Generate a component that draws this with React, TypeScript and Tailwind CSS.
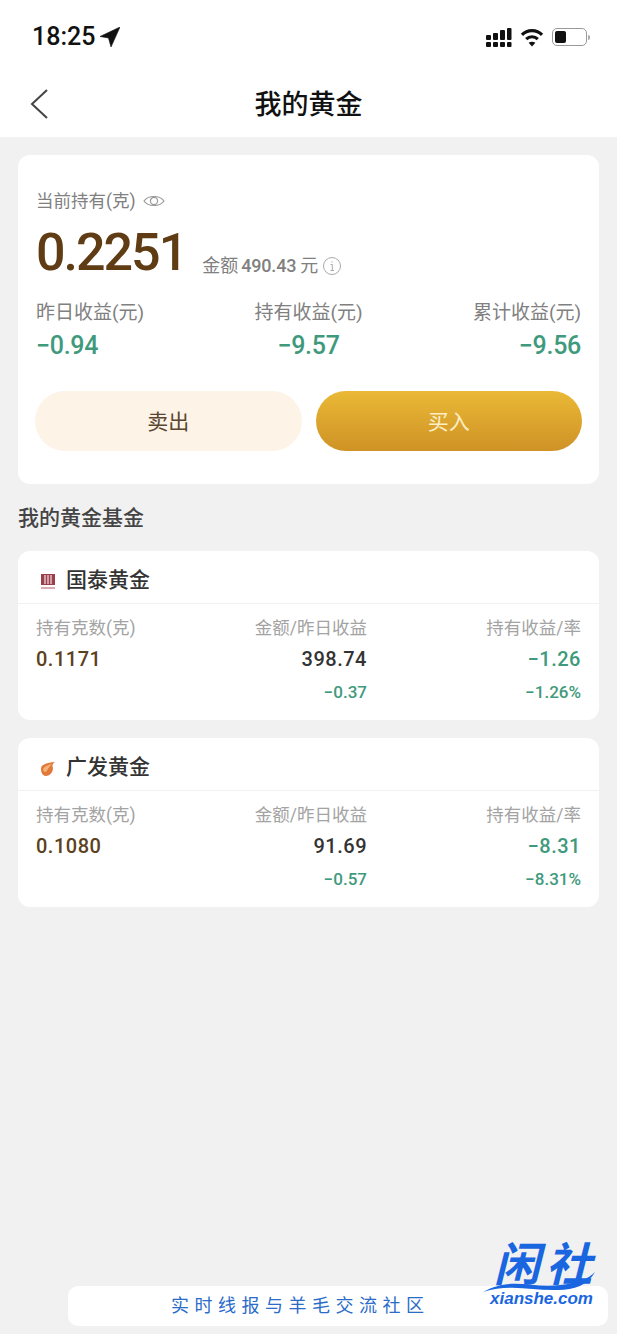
const font = { cjk: "font-['Roboto','Noto_Sans_CJK_SC',sans-serif]" };

function StatusBar() {
  return (
    <div className="h-[68px] flex items-start justify-between pl-[32px] pr-[27px] pt-[23px]">
      <div className="flex items-center gap-[5px]">
        <span className="text-[25px] leading-[28px] font-medium text-[#111]">18:25</span>
        <svg width="20" height="20" viewBox="0 0 20 20">
          <path d="M20 0 L0 9.5 L8.5 11 L11 20 Z" fill="#111" stroke="#111" strokeWidth="0.6" strokeLinejoin="round" />
        </svg>
      </div>
      <div className="flex items-center gap-[8px] pt-[4px]">
        <svg width="26" height="20" viewBox="0 0 26 20" fill="#111">
          <rect x="0" y="8" width="5" height="5" rx="1" />
          <rect x="0" y="15" width="5" height="5" rx="1" />
          <rect x="7" y="6" width="5" height="7" rx="1" />
          <rect x="7" y="15" width="5" height="5" rx="1" />
          <rect x="14" y="3" width="5" height="10" rx="1" />
          <rect x="14" y="15" width="5" height="5" rx="1" />
          <rect x="21" y="1" width="4.5" height="12" rx="1" />
          <rect x="21" y="15" width="4.5" height="5" rx="1" />
        </svg>
        <svg width="24" height="19" viewBox="0 0 22 18" fill="none" stroke="#111" strokeWidth="3">
          <path d="M1.5 6.5 C6.5 1.2 15.5 1.2 20.5 6.5" />
          <path d="M5.5 10.5 C8.5 7.6 13.5 7.6 16.5 10.5" />
          <path d="M11 17.5 L7.8 14 C9.6 12.6 12.4 12.6 14.2 14 Z" fill="#111" stroke="none" />
        </svg>
        <div className="flex items-center gap-[1px]">
          <div className="w-[35px] h-[18px] rounded-[5px] border border-[#999] p-[2px]">
            <div className="w-[11px] h-full rounded-[2px] bg-[#111]" />
          </div>
          <div className="w-[2px] h-[5px] rounded-r-full bg-[#aaa]" />
        </div>
      </div>
    </div>
  );
}

function Stat({ label, value, align }: { label: string; value: string; align: string }) {
  return (
    <div className={`flex flex-col ${align}`}>
      <span className="text-[19px] leading-[24px] text-[#808080]">{label}</span>
      <span className="mt-[6px] text-[25px] leading-[30px] font-medium tracking-[-0.3px] text-[#3f9a7d]">{value}</span>
    </div>
  );
}

function FundIcon({ kind }: { kind: "guotai" | "gf" }) {
  if (kind === "guotai") {
    return (
      <svg width="14" height="17" viewBox="0 0 14 17">
        <rect x="0" y="1" width="14" height="11" fill="#9c3f4c" />
        <path d="M4 2 V11 M7 2 V11 M10 2 V11" stroke="#f3dfe2" strokeWidth="1.2" />
        <rect x="0" y="14" width="14" height="2" fill="#d9aab2" />
      </svg>
    );
  }
  return (
    <svg width="15" height="15" viewBox="0 0 15 15">
      <path d="M1 8 C1 4 5 2 15 1 C12 3 12 5 13 7 C13 12 9 15 6 15 C3 15 1 12 1 8 Z" fill="#e2793a" />
      <path d="M3 8 C5 5 8 4 12 3 C9 6 8 8 6 11 C4 11 3 10 3 8 Z" fill="#f3b277" />
    </svg>
  );
}

function FundCard({
  kind,
  name,
  grams,
  amount,
  yesterday,
  profit,
  rate,
}: {
  kind: "guotai" | "gf";
  name: string;
  grams: string;
  amount: string;
  yesterday: string;
  profit: string;
  rate: string;
}) {
  return (
    <div className="bg-white rounded-[12px] h-[169px]">
      <div className="h-[53px] flex items-center pl-[22px] pt-[8px] gap-[11px] border-b border-[#f1f1f1]">
        <div className="w-[15px] flex justify-center">
          <FundIcon kind={kind} />
        </div>
        <span className="text-[21px] font-medium text-[#333]">{name}</span>
      </div>
      <div className="grid grid-cols-[130px_201px_214px] px-[18px] pt-[12px]">
        <div className="flex flex-col">
          <span className="text-[17.5px] leading-[24px] text-[#a3a3a3]">持有克数(克)</span>
          <span className="mt-[7px] text-[20px] leading-[24px] font-medium tracking-[0.5px] text-[#5c4120]">{grams}</span>
        </div>
        <div className="flex flex-col items-end">
          <span className="text-[17.5px] leading-[24px] text-[#a3a3a3]">金额/昨日收益</span>
          <span className="mt-[7px] text-[20px] leading-[24px] font-medium tracking-[0.5px] text-[#333]">{amount}</span>
          <span className="mt-[11px] text-[17px] leading-[20px] font-medium text-[#3f9a7d]">{yesterday}</span>
        </div>
        <div className="flex flex-col items-end">
          <span className="text-[17.5px] leading-[24px] text-[#a3a3a3]">持有收益/率</span>
          <span className="mt-[7px] text-[20px] leading-[24px] font-medium tracking-[0.5px] text-[#3f9a7d]">{profit}</span>
          <span className="mt-[11px] text-[17px] leading-[20px] font-medium text-[#3f9a7d]">{rate}</span>
        </div>
      </div>
    </div>
  );
}

function Watermark() {
  return (
    <div className="absolute left-[68px] top-[1286px] w-[540px] h-[40px] rounded-[10px] bg-white flex items-center pl-[103px] pb-[2px]">
      <span className="text-[18px] tracking-[5.5px] text-[#2a6cc8]">实时线报与羊毛交流社区</span>
      <div className="absolute left-[414px] top-[-50px] w-[120px] h-[76px]">
        <span className="absolute left-[12px] top-[6px] text-[46px] leading-[46px] font-bold italic tracking-[6px] whitespace-nowrap text-[#1a66e0]">闲社</span>
        <svg className="absolute left-0 top-[36px]" width="120" height="22" viewBox="0 0 120 22">
          <path d="M1 20 C30 4 50 17 78 13 C96 11 106 7 113 0 C106 13 92 18 76 18 C50 19 30 11 1 20 Z" fill="#1a66e0" />
        </svg>
        <span className="absolute left-[8px] top-[54px] text-[17px] leading-[18px] font-bold italic font-['Liberation_Sans',sans-serif] text-[#1a66e0]">xianshe.com</span>
      </div>
    </div>
  );
}

export default function App() {
  return (
    <div className={`relative min-h-[1334px] bg-[#f1f1f1] ${font.cjk}`}>
      <div className="bg-white h-[137px]">
        <StatusBar />
        <div className="relative h-[69px] flex items-center justify-center pt-[6px]">
          <svg className="absolute left-[30px] top-[21px]" width="18" height="30" viewBox="0 0 18 30" fill="none" stroke="#444" strokeWidth="2">
            <path d="M17 1 L2 15 L17 29" />
          </svg>
          <span className="text-[27px] font-medium text-[#111]">我的黄金</span>
        </div>
      </div>

      <div className="px-[18px] pt-[18px]">
        <div className="bg-white rounded-[12px] h-[329px] px-[18px] pt-[33px]">
          <div className="flex items-center gap-[7px]">
            <span className="text-[17.5px] leading-[26px] text-[#808080]">当前持有(克)</span>
            <svg width="22" height="14" viewBox="0 0 22 14" fill="none" stroke="#999" strokeWidth="1.2">
              <path d="M1 7 C5 1 17 1 21 7 C17 13 5 13 1 7 Z" />
              <circle cx="11" cy="7" r="3.6" />
            </svg>
          </div>
          <div className="flex items-end mt-[10px]">
            <span className="text-[52px] leading-[58px] font-medium tracking-[-2px] text-[#5f3c14]">0.2251</span>
            <div className="flex items-center ml-[16px] mb-[3px] text-[#808080]">
              <span className="text-[18px]">金额</span>
              <span className="ml-[3px] text-[18px] font-medium tracking-[-0.2px]">490.43</span>
              <span className="ml-[4px] text-[18px]">元</span>
              <svg className="ml-[4px]" width="20" height="20" viewBox="0 0 20 20" fill="none" stroke="#aaa" strokeWidth="1">
                <circle cx="10" cy="10" r="8.5" />
                <path d="M8.5 8.5 H10.3 V14.5 M8.5 14.5 H12 M10 5.3 V6.5" />
              </svg>
            </div>
          </div>
          <div className="grid grid-cols-3 mt-[19px]">
            <Stat label="昨日收益(元)" value="−0.94" align="items-start" />
            <Stat label="持有收益(元)" value="−9.57" align="items-center" />
            <Stat label="累计收益(元)" value="−9.56" align="items-end" />
          </div>
          <div className="grid grid-cols-2 gap-[14px] -mx-px mt-[30px]">
            <button className="h-[60px] pt-[3px] rounded-full bg-[#fdf3e7] text-[21px] text-[#5a4630]">卖出</button>
            <button className="h-[60px] pt-[3px] rounded-full bg-linear-to-b from-[#eab936] to-[#cf9226] text-[21px] text-[#fbeec4]">买入</button>
          </div>
        </div>

        <div className="mt-[18px] text-[21px] leading-[32px] font-medium text-[#444]">我的黄金基金</div>

        <div className="mt-[17px] flex flex-col gap-[18px]">
          <FundCard kind="guotai" name="国泰黄金" grams="0.1171" amount="398.74" yesterday="−0.37" profit="−1.26" rate="−1.26%" />
          <FundCard kind="gf" name="广发黄金" grams="0.1080" amount="91.69" yesterday="−0.57" profit="−8.31" rate="−8.31%" />
        </div>
      </div>

      <Watermark />
    </div>
  );
}
